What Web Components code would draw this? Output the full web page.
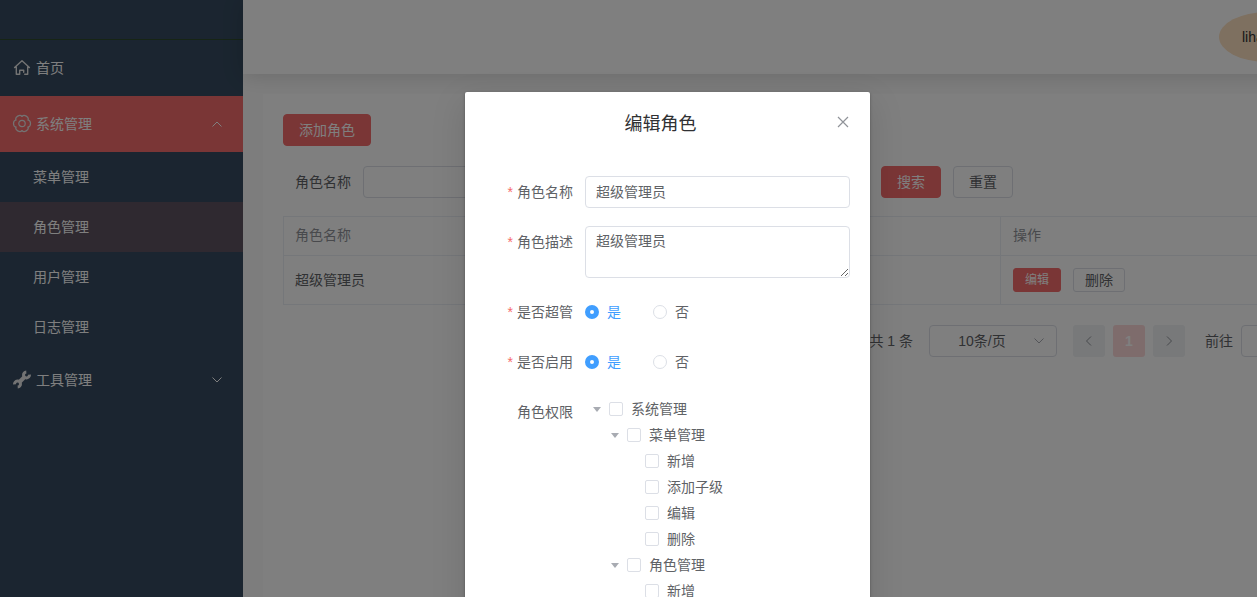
<!DOCTYPE html>
<html lang="zh-CN">
<head>
<meta charset="utf-8">
<title>角色管理</title>
<style>
html { overflow: hidden; }
body {
  margin: 0; min-width: 1335px;
  font: 14px/20px "Liberation Sans", "Noto Sans CJK SC", sans-serif;
  color: #606266;
}
</style>
</head>
<body>
<admin-shell>
  <side-menu slot="side"></side-menu>
  <top-bar slot="top"></top-bar>
  <role-page></role-page>
  <modal-dialog slot="overlay" heading="编辑角色"><role-form></role-form></modal-dialog>
</admin-shell>
<script>
const define = (name, html) => customElements.define(name, class extends HTMLElement {
  constructor() {
    super();
    this.attachShadow({ mode: "open" });
  }
  connectedCallback() {
    const t = document.createElement("template");
    t.innerHTML = typeof html === "function" ? html(this) : html;
    this.shadowRoot.replaceChildren(t.content.cloneNode(true));
  }
});

define("admin-shell", `
<style>
:host { display: flex; position: relative; height: 100vh; overflow: hidden; }
.side { flex: 0 0 243px; background: #364b60; }
.main { flex: 1; min-width: 0; background: #fbfbfb; }
</style>
<div class="side"><slot name="side"></slot></div>
<div class="main"><slot name="top"></slot><slot></slot></div>
<slot name="overlay"></slot>`);

const chevron = d => `<svg class="arrow" width="12" height="12" viewBox="0 0 12 12" fill="none" stroke="currentColor"><path d="${d}"/></svg>`;
const UP = "M1.5 8.5 6 4l4.5 4.5", DOWN = "M1.5 3.5 6 8l4.5-4.5";
const gearLobes = [0, 60, 120, 180, 240, 300]
  .map(a => `<path transform="rotate(${a} 10 10)" d="M16.1 6.5C19.3 7 19.3 13 16.1 13.5"/>`).join("");

define("side-menu", `
<style>
:host { display: block; color: #fff; }
.logo { box-sizing: border-box; height: 40px; border-bottom: 1px solid #2e4a2b; }
a { display: flex; align-items: center; color: inherit; text-decoration: none; }
.top { height: 56px; padding: 0 20px 0 12px; gap: 4px; }
.top span { flex: 1; }
.top.open { background: #f56c6c; }
.sub a { height: 50px; padding-left: 33px; }
.sub a.active { background: #5e5361; }
.icon { flex: none; width: 20px; height: 20px; color: #e6e6e6; }
</style>
<div class="logo"></div>
<nav>
  <a class="top" href="#home">
    <svg class="icon" viewBox="0 0 20 20" fill="none" stroke="currentColor" stroke-width="1.4" stroke-linejoin="round" stroke-linecap="round"><path d="M2.600 9.500 10 2.700l7.400 6.800M4.300 9v7.300h3.400v-4.100h4v2M15.700 9v7.300h-3"/></svg>
    <span>首页</span></a>
  <a class="top open" href="#system">
    <svg class="icon" viewBox="0 0 20 20" fill="none" stroke="currentColor" stroke-width="1.2" stroke-linecap="round"><circle cx="10" cy="9.500" r="3.2"/><g transform="translate(0 -.5)">${gearLobes}</g></svg>
    <span>系统管理</span>${chevron(UP)}</a>
  <div class="sub">
    <a href="#menus">菜单管理</a>
    <a class="active" href="#roles">角色管理</a>
    <a href="#users">用户管理</a>
    <a href="#logs">日志管理</a>
  </div>
  <a class="top" href="#tools">
    <svg class="icon" viewBox="0 0 20 20" fill="none" stroke="currentColor"><path stroke-width="3" d="M17.500 4.700A3 3 0 1 1 14.300 1.900"/><path stroke-width="3" d="M2.500 14.300A3 3 0 1 1 5.700 17.100"/><path stroke-width="4" d="M7 12.500 13 6.500"/></svg>
    <span>工具管理</span>${chevron(DOWN)}</a>
</nav>`);

define("top-bar", `
<style>
:host { display: flex; align-items: center; justify-content: flex-end; box-sizing: border-box; height: 74px; padding: 0 20px;
  background: #fff; position: relative; box-shadow: 0 2px 20px rgba(0,0,0,.15); }
button { width: 96px; height: 50px; border: 0; border-radius: 50%; background: #fce0c0; padding: 0 23px; font: inherit; color: #303133; text-align: left; }
</style>
<button>liha</button>`);

define("ui-button", `
<style>
:host { display: flex; }
button { height: 32px; padding: 0 15px; border: 1px solid #dcdfe6; border-radius: 4px; background: #fff; color: #606266; font: inherit; }
:host([size]) button { height: 24px; padding: 0 11px; border-radius: 3px; }
:host([size=mini]) button { font-size: 12px; }
:host([primary]) button { background: #f56c6c; border-color: #f56c6c; color: #fff; }
</style>
<button type="button"><slot></slot></button>`);

define("role-page", `
<style>
:host { display: block; margin: 20px; padding: 20px; background: #fff; min-height: 100vh; }
form { display: flex; align-items: center; margin: 20px 0 18px; }
.field { display: flex; align-items: center; flex: 0 0 598px; }
.field label { flex: 0 0 68px; text-align: right; padding-right: 12px; }
input { box-sizing: border-box; height: 32px; border: 1px solid #dcdfe6; border-radius: 4px; background: #fff; font: inherit; }
.field input { flex: 0 0 240px; }
.actions { display: flex; gap: 12px; }
table { width: 100%; table-layout: fixed; border-collapse: collapse; color: #606266; }
.ops { width: 294px; }
th, td { border: 1px solid #ebeef5; padding: 0 12px; text-align: left; font-weight: 400; }
th:first-child, td:first-child { padding-left: 11px; }
th { height: 36px; padding-bottom: 2px; color: #909399; }
td { height: 48px; }
.pager { display: flex; align-items: center; justify-content: flex-end; margin-top: 20px; color: #606266; }
.size { position: relative; display: flex; margin: 0 16px; }
select { appearance: none; width: 128px; height: 32px; box-sizing: border-box; padding: 0 31px 0 9px; border: 1px solid #dcdfe6; border-radius: 4px; background: #fff; color: #606266; font: inherit; text-align-last: center; }
.size svg { position: absolute; right: 12px; top: 10px; color: #a8abb2; pointer-events: none; }
.pages { display: flex; gap: 8px; margin-right: 20px; }
.pages button { width: 32px; height: 32px; padding: 0; border: 0; border-radius: 3px; background: #f0f2f5; color: #909399; display: grid; place-items: center; font: inherit; }
.pages .on { background: #fcd9d9; color: #fff; font-weight: 700; }
.pager input { width: 54px; margin-left: 8px; }
</style>
<ui-button primary>添加角色</ui-button>
<form>
  <div class="field"><label for="q">角色名称</label><input id="q"></div>
  <div class="actions"><ui-button primary>搜索</ui-button><ui-button>重置</ui-button></div>
</form>
<table>
  <colgroup><col><col class="ops"></colgroup>
  <thead><tr><th>角色名称</th><th>操作</th></tr></thead>
  <tbody><tr><td>超级管理员</td><td><div class="actions"><ui-button primary size="mini">编辑</ui-button><ui-button size="small">删除</ui-button></div></td></tr></tbody>
</table>
<div class="pager">
  <span>共 1 条</span>
  <div class="size"><select aria-label="每页条数"><option>10条/页</option></select>${chevron(DOWN)}</div>
  <div class="pages">
    <button aria-label="上一页">${chevron("M8 1.5 3.5 6 8 10.5")}</button>
    <button class="on">1</button>
    <button aria-label="下一页">${chevron("M4 1.5 8.5 6 4 10.5")}</button>
  </div>
  <label for="go">前往</label><input id="go">
</div>`);

define("modal-dialog", el => `
<style>
:host { position: absolute; inset: 0; display: flex; justify-content: center; align-items: flex-start; padding-top: 92px; overflow: hidden; background: rgba(0,0,0,.5); }
section { box-sizing: border-box; width: 405px; background: #fff; border-radius: 2px; box-shadow: 0 12px 32px 4px rgba(0,0,0,.1), 0 1px 3px rgba(0,0,0,.3); }
header { display: flex; align-items: flex-start; padding: 20px 20px 10px; }
h2 { flex: 1; margin: 0; font-size: 18px; line-height: 24px; font-weight: 400; color: #303133; text-align: center; }
button { display: flex; margin-top: 3px; width: 14px; height: 14px; padding: 0; border: 0; background: none; color: #909399; }
.body { padding: 30px 20px; }
</style>
<section role="dialog" aria-label="${el.getAttribute("heading")}">
  <header><h2>${el.getAttribute("heading")}</h2>
    <button aria-label="关闭"><svg width="14" height="14" viewBox="0 0 14 14" fill="none" stroke="currentColor" stroke-width="1.2"><path d="M2 2l10 10M12 2 2 12"/></svg></button></header>
  <div class="body"><slot></slot></div>
</section>`);

define("radio-pair", `
<style>
:host { display: flex; gap: 32px; height: 32px; align-items: center; }
label { display: flex; align-items: center; gap: 8px; }
input { appearance: none; box-sizing: border-box; width: 14px; height: 14px; margin: 0; border: 1px solid #dcdfe6; border-radius: 50%; background: #fff; }
input:checked { border: 5px solid #409eff; }
input:checked + span { color: #409eff; }
</style>
<label><input type="radio" name="r" checked><span>是</span></label>
<label><input type="radio" name="r"><span>否</span></label>`);

define("tree-node", el => `
<style>
:host { display: block; }
.row { display: flex; align-items: center; height: 26px; }
.caret { width: 24px; display: grid; place-items: center; }
.caret::before { content: ""; border: 4px solid transparent; border-top: 5px solid #a8abb2; border-bottom: 0; }
:host([leaf]) .caret::before { border-color: transparent; }
input { appearance: none; box-sizing: border-box; width: 14px; height: 14px; margin: 0 8px 0 0; border: 1px solid #dcdfe6; border-radius: 2px; background: #fff; }
label { display: flex; align-items: center; }
.kids { padding-left: 18px; }
</style>
<div class="row"><span class="caret"></span><label><input type="checkbox"><span>${el.getAttribute("label")}</span></label></div>
<div class="kids"><slot></slot></div>`);

define("form-row", el => `
<style>
:host { display: flex; margin-bottom: 18px; }
.label { flex: 0 0 88px; line-height: 32px; text-align: right; padding-right: 12px; }
:host([required]) .label::before { content: "*"; color: #f56c6c; margin-right: 4px; }
.content { flex: 1; min-width: 0; }
</style>
<span class="label">${el.getAttribute("label")}</span><div class="content"><slot></slot></div>`);

define("role-form", `
<style>
:host { display: block; }
input, textarea { display: block; box-sizing: border-box; width: 100%; border: 1px solid #dcdfe6; border-radius: 4px; background: #fff; color: #606266; font: inherit; padding: 4px 10px; }
input { height: 32px; padding-bottom: 6px; }
textarea { height: 52px; resize: vertical; }
</style>
<form>
<form-row required label="角色名称"><input aria-label="角色名称" value="超级管理员"></form-row>
<form-row required label="角色描述"><textarea aria-label="角色描述">超级管理员</textarea></form-row>
<form-row required label="是否超管"><radio-pair></radio-pair></form-row>
<form-row required label="是否启用"><radio-pair></radio-pair></form-row>
<form-row label="角色权限">
  <tree-node label="系统管理">
    <tree-node label="菜单管理">
      <tree-node leaf label="新增"></tree-node>
      <tree-node leaf label="添加子级"></tree-node>
      <tree-node leaf label="编辑"></tree-node>
      <tree-node leaf label="删除"></tree-node>
    </tree-node>
    <tree-node label="角色管理">
      <tree-node leaf label="新增"></tree-node>
    </tree-node>
  </tree-node>
</form-row>
</form>`);
</script>
</body>
</html>
